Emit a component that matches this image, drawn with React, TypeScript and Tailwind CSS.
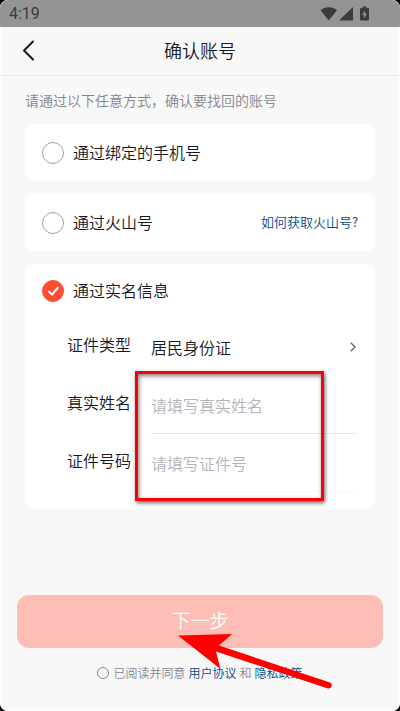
import { useState } from "react";

type OptionProps = {
  id: string;
  label: string;
  checked: boolean;
  onSelect: (id: string) => void;
};

const Option = ({ id, label, checked, onSelect }: OptionProps) => {
  return (
    <label className="flex items-center gap-[9px] text-base text-[#161823]">
      <span className="grid place-items-center">
        <input
          type="radio"
          name="method"
          checked={checked}
          onChange={() => onSelect(id)}
          className="col-start-1 row-start-1 size-[22px] appearance-none rounded-full border border-[#a2a2a7] checked:border-[#ff4c33] checked:bg-[#ff4c33]"
        />
        {checked && (
          <svg
            viewBox="0 0 22 22"
            className="pointer-events-none col-start-1 row-start-1 size-[22px]"
            fill="none"
            stroke="white"
            strokeWidth="2"
            strokeLinecap="round"
            strokeLinejoin="round"
          >
            <path d="M7 11.8 L10 14.6 L15.8 7.6" />
          </svg>
        )}
      </span>
      <span className="pb-[2px]">{label}</span>
    </label>
  );
};

type FieldProps = {
  id: string;
  label: string;
  placeholder: string;
  line: string;
};

const Field = ({ id, label, placeholder, line }: FieldProps) => {
  return (
    <div className="flex h-[58px] items-stretch">
      <label htmlFor={id} className="flex w-[84px] shrink-0 items-center pb-[6px]">
        {label}
      </label>
      <input
        id={id}
        placeholder={placeholder}
        className={`min-w-0 flex-1 border-b bg-transparent outline-none placeholder:text-[#b4b4b7] ${line}`}
      />
    </div>
  );
};

const StatusBar = () => {
  return (
    <div className="flex h-[27px] shrink-0 items-center justify-between bg-[#949494] pl-[9px] pr-[30px] text-[#3b3b3b]">
      <span className="font-[Roboto] text-base leading-none font-normal">4:19</span>
      <svg width="50" height="16" viewBox="0 0 50 16" fill="currentColor">
        <path d="M0.5 4.3 C5 0.2 12.5 0.2 17 4.3 L8.8 14.5 Z" />
        <path d="M33 1 V14.5 H19 Z" />
        <path
          fillRule="evenodd"
          d="M42.5 0.5 H46.5 V2 H48 Q49 2 49 3 V13.5 Q49 14.5 48 14.5 H41 Q40 14.5 40 13.5 V3 Q40 2 41 2 H42.5 Z M45 4.5 L42 9 H44 V12.5 L47 7.8 H45 Z"
        />
      </svg>
    </div>
  );
};

export default function App() {
  const [method, setMethod] = useState("realname");

  return (
    <div className="min-h-screen bg-black font-['Noto_Sans_CJK_SC','Noto_Sans',sans-serif] font-[350] text-[#161823]">
      <div className="flex min-h-screen flex-col overflow-hidden rounded-lg bg-[#f8f8f8] shadow-[inset_0_0_0_2px_#fdfdfd]">
        <StatusBar />
        <header className="grid h-[49px] shrink-0 grid-cols-[56px_1fr_56px] items-center border-b border-[#e8e8e8] pb-[2px]">
          <button type="button" aria-label="返回" className="pl-[22px]">
            <svg width="13" height="21" viewBox="0 0 13 21" fill="none" stroke="#161823" strokeWidth="2" strokeLinecap="round" strokeLinejoin="round">
              <path d="M11 1.5 L2 10.5 L11 19.5" />
            </svg>
          </button>
          <h1 className="text-center text-lg">确认账号</h1>
        </header>

        <main className="flex flex-1 flex-col">
          <p className="px-[25px] pt-[14px] pb-[13px] text-sm leading-[21px] text-[#85868b]">
            请通过以下任意方式，确认要找回的账号
          </p>

          <div className="flex flex-col gap-[13px] px-[25px]">
            <section className="flex h-[57px] items-center rounded-lg bg-white px-[17px]">
              <Option id="phone" label="通过绑定的手机号" checked={method === "phone"} onSelect={setMethod} />
            </section>

            <section className="flex h-[57px] items-center justify-between rounded-lg bg-white px-[17px]">
              <Option id="huoshan" label="通过火山号" checked={method === "huoshan"} onSelect={setMethod} />
              <a href="#" className="pb-[2px] text-[13px] text-[#04498d]">
                如何获取火山号?
              </a>
            </section>

            <section className="rounded-lg bg-white pb-[17px]">
              <div className="flex h-[54px] items-center px-[17px]">
                <Option id="realname" label="通过实名信息" checked={method === "realname"} onSelect={setMethod} />
              </div>
              <div className="relative pr-[17px] pl-[42px]">
                <div className="flex h-[58px] items-stretch">
                  <label htmlFor="idType" className="flex w-[84px] shrink-0 items-center pb-[6px]">
                    证件类型
                  </label>
                  <div className="grid flex-1 items-center">
                    <select id="idType" className="col-start-1 row-start-1 w-full appearance-none bg-transparent outline-none">
                      <option>居民身份证</option>
                    </select>
                    <svg
                      className="pointer-events-none col-start-1 row-start-1 mr-[2px] justify-self-end"
                      width="6"
                      height="10"
                      viewBox="0 0 6 10"
                      fill="none"
                      stroke="#66676d"
                      strokeWidth="1.4"
                    >
                      <path d="M0.8 0.8 L5 5 L0.8 9.2" />
                    </svg>
                  </div>
                </div>
                <Field id="realName" label="真实姓名" placeholder="请填写真实姓名" line="border-[#e9e9ea]" />
                <Field id="idNumber" label="证件号码" placeholder="请填写证件号" line="border-[#f7f7f7]" />
                {/* highlight over both inputs */}
                <div className="pointer-events-none absolute top-[53px] right-[51px] left-[110px] h-[130px] border-[3px] border-[#fb0007] shadow-[1px_2px_4px_rgba(0,0,0,0.6),inset_1px_2px_4px_rgba(0,0,0,0.5)]" />
              </div>
            </section>
          </div>

          <footer className="relative mt-auto px-[17px] pb-[29px]">
            <button type="button" className="h-[53px] w-full rounded-xl bg-[#fdbeb5] pb-[2px] text-[19px] text-white">
              下一步
            </button>
            <div className="mt-4 flex items-center justify-center text-xs leading-[18px] text-[#85868b]">
              <input
                id="agree"
                type="checkbox"
                className="mr-1 size-3 appearance-none rounded-full border border-[#85868b] checked:bg-[#ff4c33]"
              />
              <label htmlFor="agree">已阅读并同意</label>
              <a href="#" className="mx-[3px] text-[#04498d]">用户协议</a>
              和
              <a href="#" className="ml-[3px] text-[#04498d]">隐私政策</a>
            </div>
            <svg
              className="pointer-events-none absolute top-[38px] left-1/2 -ml-6"
              width="160"
              height="60"
              viewBox="0 0 160 60"
              fill="#fe0000"
            >
              <path d="M2 2.5 L56 1 L43 12.5 L154 49.5 A3.2 3.2 0 0 1 152 55.5 L40 18.5 L44.5 36 Z" />
            </svg>
          </footer>
        </main>
      </div>
    </div>
  );
}
